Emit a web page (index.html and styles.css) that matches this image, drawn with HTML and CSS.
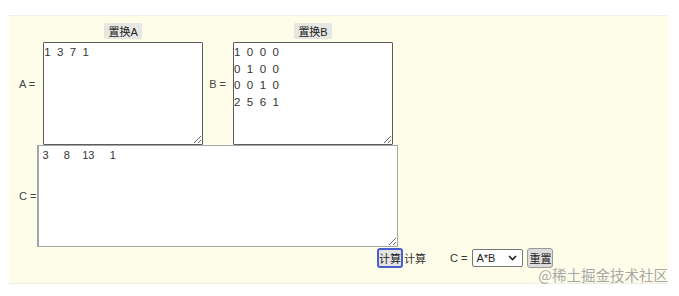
FILE: index.html
```html
<!DOCTYPE html>
<html>
<head>
<meta charset="utf-8">
<link rel="stylesheet" href="styles.css">
</head>
<body>
<div class="panel">
  <div class="row top">
    <span class="label">A =</span>
    <div class="col">
      <button class="swap">置换A</button>
      <textarea class="mat">1 3 7 1</textarea>
    </div>
    <span class="label lb">B =</span>
    <div class="col">
      <button class="swap">置换B</button>
      <textarea class="mat">1 0 0 0
0 1 0 0
0 0 1 0
2 5 6 1</textarea>
    </div>
  </div>
  <div class="row mid">
    <span class="label lc">C =</span>
    <textarea class="res">3     8    13     1</textarea>
  </div>
  <div class="row bot">
    <button class="calc">计算</button>
    <span class="txt">计算</span>
    <span class="txt ceq">C =</span>
    <div class="select"><span>A*B</span><svg width="9" height="6" viewBox="0 0 9 6"><path d="M1 1 L4.5 4.5 L8 1" fill="none" stroke="#222" stroke-width="1.6"/></svg></div>
    <button class="reset">重置</button>
  </div>
</div>
<div class="watermark">@稀土掘金技术社区</div>
</body>
</html>
```
FILE: styles.css
```css
html, body {
  margin: 0;
  padding: 0;
  background: #ffffff;
  width: 679px;
  height: 296px;
  overflow: hidden;
  position: relative;
  font-family: "Liberation Sans", Arial, "Noto Sans CJK SC", sans-serif;
  font-size: 11px;
  color: #333;
}
.panel {
  margin: 15px 0 0 9px;
  width: 659px;
  height: 269px;
  box-sizing: border-box;
  background: #fdfdea;
  border-top: 1px solid #f0f0e4;
  border-bottom: 1px solid #eeeee2;
  padding: 7px 0 0 10px;
}
.row {
  display: flex;
  align-items: center;
}
.label {
  color: #444;
  font-size: 11px;
  margin-right: 8px;
  white-space: nowrap;
}
.lb {
  margin-left: 6px;
  margin-right: 7px;
}
.lc {
  margin-right: 1px;
}
.col {
  display: flex;
  flex-direction: column;
  align-items: center;
  gap: 3px;
}
button {
  font-family: "Liberation Sans", Arial, "Noto Sans CJK SC", sans-serif;
  font-size: 11px;
  color: #222;
  padding: 0;
  margin: 0;
}
.swap {
  height: 16px;
  width: 38px;
  border: none;
  background: #e6e6e3;
  border-radius: 2px;
}
textarea {
  display: block;
  box-sizing: border-box;
  margin: 0;
  resize: both;
  font-family: "Liberation Sans", Arial, sans-serif;
  font-size: 11px;
  color: #333;
  background: #fff;
  outline: none;
}
.mat {
  width: 160px;
  height: 103px;
  border: 1px solid #5c5c5c;
  border-radius: 1px;
  padding: 1px 0 0 0;
  font-size: 11.5px;
  line-height: 16.5px;
  letter-spacing: 1.6px;
}
.res {
  width: 361px;
  height: 102px;
  border: 1px solid #a6a6a6;
  border-left-width: 2px;
  padding: 2px 0 0 3px;
  line-height: 14px;
}
.bot {
  margin-left: 358px;
  margin-top: 1px;
  height: 20px;
}
.calc {
  width: 26px;
  height: 20px;
  border: 2px solid #4a5fcf;
  border-radius: 3px;
  background: #e4e4e4;
}
.txt {
  color: #333;
  margin-left: 1px;
}
.ceq {
  margin-left: 24px;
  margin-right: 5px;
}
.select {
  width: 51px;
  height: 18px;
  box-sizing: border-box;
  border: 1px solid #767676;
  border-radius: 2px;
  background: #fff;
  display: flex;
  align-items: center;
  justify-content: space-between;
  padding: 0 5px 0 3px;
  color: #222;
}
.reset {
  margin-left: 4px;
  width: 26px;
  height: 20px;
  border: 1px solid #9a9a9a;
  border-radius: 3px;
  background: #dcdcdc;
}
.watermark {
  position: absolute;
  right: 11px;
  top: 266px;
  font-family: "Noto Sans CJK SC", sans-serif;
  font-size: 14.5px;
  line-height: 18px;
  color: #a8a8a8;
}
```
